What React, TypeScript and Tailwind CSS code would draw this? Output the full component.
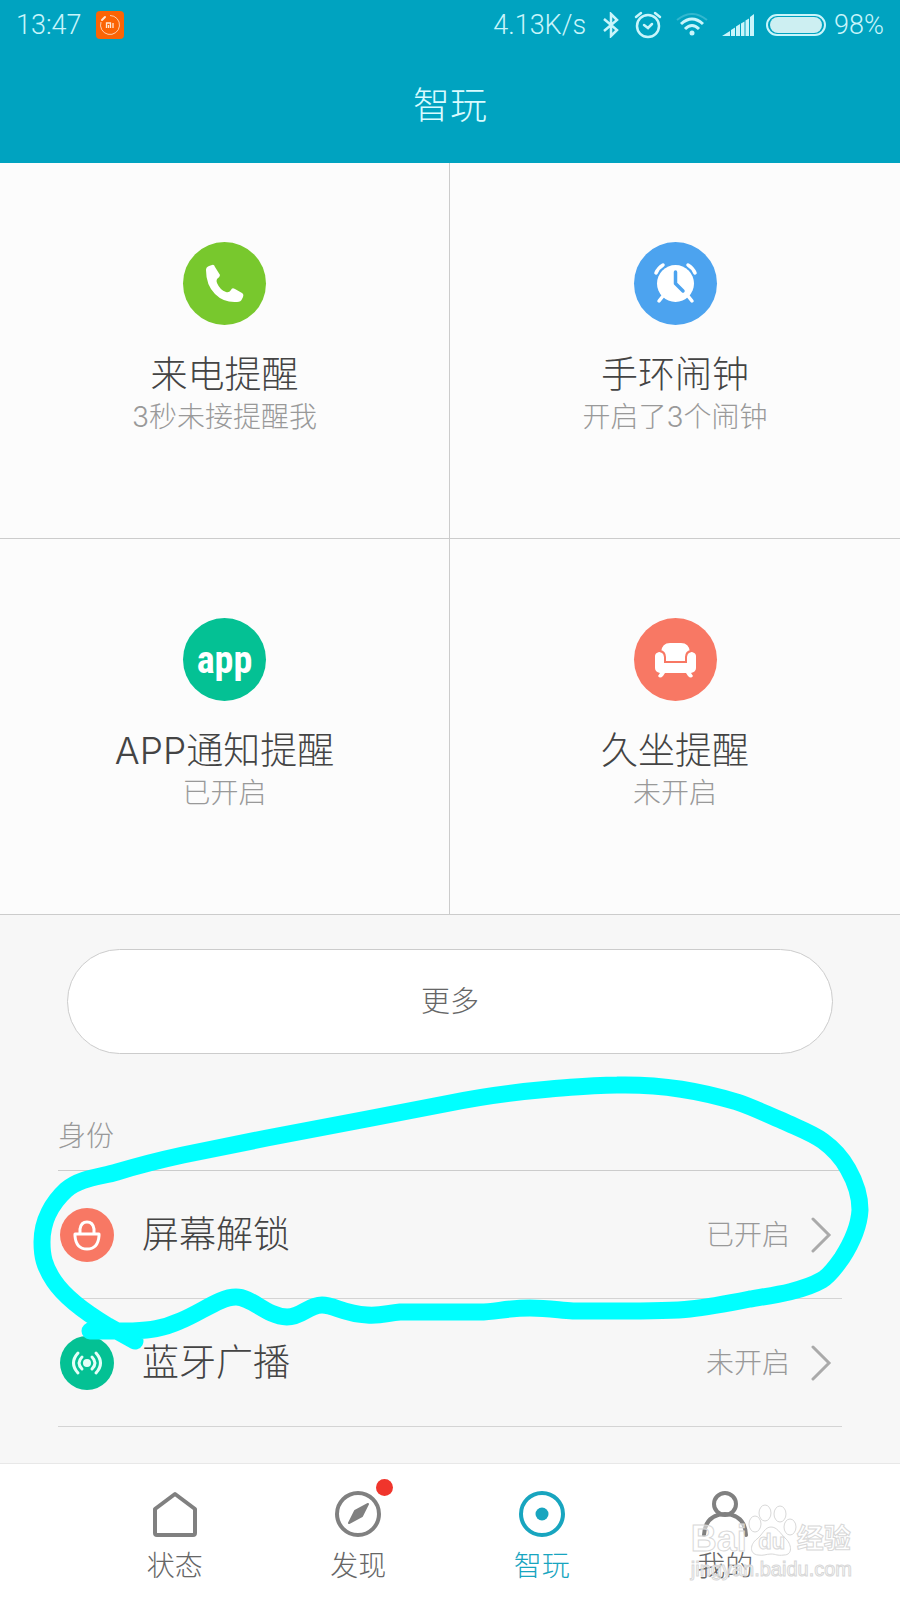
import type { ReactNode } from 'react';

const features = [
    { title: '来电提醒', note: '3秒未接提醒我', color: 'bg-[#78c82d]', icon: <PhoneIcon /> },
    { title: '手环闹钟', note: '开启了3个闹钟', color: 'bg-[#4ca3ef]', icon: <ClockIcon /> },
    { title: 'APP通知提醒', note: '已开启', color: 'bg-[#04c194]', icon: <AppMark /> },
    { title: '久坐提醒', note: '未开启', color: 'bg-[#f87864]', icon: <SofaIcon /> },
];

const identityRows = [
    { title: '屏幕解锁', value: '已开启', color: 'bg-[#f87864]', icon: <LockIcon /> },
    { title: '蓝牙广播', value: '未开启', color: 'bg-[#04c194]', icon: <BroadcastIcon /> },
];

const tabs: { label: string; icon: ReactNode; active?: boolean; dot?: boolean }[] = [
    { label: '状态', icon: <HomeIcon /> },
    { label: '发现', icon: <CompassIcon />, dot: true },
    { label: '智玩', icon: <TargetIcon />, active: true },
    { label: '我的', icon: <PersonIcon /> },
];

function PhoneIcon() {
    return (
        <svg viewBox="0 0 83 83" className="size-full" fill="#fff">
            <path d="M23 28Q23 25 26 24L29 23Q31 22 32 25L37 33Q37 35 34 37Q33 39 34 41Q37 48 43 50Q46 51 48 48Q49 45 52 47L59 51Q61 52 60 55L59 57Q58 60 54 60Q41 61 32 52Q23 43 23 28Z" />
        </svg>
    );
}

function ClockIcon() {
    return (
        <svg viewBox="0 0 83 83" className="size-full" fill="none" strokeLinecap="round" strokeLinejoin="round">
            <circle cx="41.5" cy="41.5" r="18.5" fill="#fff" />
            <path d="M22 31Q24 26 29 23M54 23Q59 26 61 31M29 54L25 59M54 54L58 59" stroke="#fff" strokeWidth="3.5" />
            <path d="M41.5 30V41.5L49 49" stroke="#4ca3ef" strokeWidth="3.5" />
        </svg>
    );
}

function AppMark() {
    return (
        <span className="font-['Roboto_Condensed','Liberation_Sans_Narrow','Roboto',sans-serif] text-[38px] leading-[40px] font-bold">
            app
        </span>
    );
}

function SofaIcon() {
    return (
        <svg viewBox="0 0 83 83" className="size-full" fill="#fff">
            <path d="M27 34Q28 25 36 25H47Q55 25 56 34Q52 36 52 43H31Q31 36 27 34Z" />
            <path d="M21 38Q21 35 25 34Q30 34 30 39V45H53V39Q53 34 58 34Q62 35 62 38V50Q62 54 57 55L59 58Q57 61 54 58L52 55H31L29 58Q26 61 24 58L26 55Q21 54 21 50Z" />
            <path d="M26 33Q31 34 31 39V44H52V39Q52 34 57 33" fill="none" stroke="#f87864" strokeWidth="2" />
        </svg>
    );
}

function LockIcon() {
    return (
        <svg viewBox="0 0 54 54" className="size-full" fill="none" stroke="#fff" strokeWidth="3" strokeLinejoin="round">
            <path d="M15 26H39V28Q38 41 27 41Q16 41 15 28ZM20 26V21Q21 14 27 14Q33 14 34 21V26" />
        </svg>
    );
}

function BroadcastIcon() {
    return (
        <svg viewBox="0 0 54 54" className="size-full" fill="none" stroke="#e4fff8" strokeWidth="3" strokeLinecap="round">
            <circle cx="27" cy="27" r="4" fill="#e4fff8" stroke="none" />
            <path d="M22 21Q16 27 22 33M32 21Q38 27 32 33M18 17Q9 27 18 37M36 17Q45 27 36 37" />
        </svg>
    );
}

function HomeIcon() {
    return (
        <svg viewBox="0 0 46 46" className="size-[46px]" fill="none" stroke="currentColor" strokeWidth="4" strokeLinejoin="round">
            <path d="M3 18L23 3L43 18V42Q43 44 41 44H5Q3 44 3 42Z" />
        </svg>
    );
}

function CompassIcon() {
    return (
        <svg viewBox="0 0 46 46" className="size-[46px]" fill="none" stroke="currentColor" strokeWidth="4">
            <circle cx="23" cy="23" r="21" />
            <path d="M33 13L27 25L14 32L20 20Z" fill="currentColor" strokeWidth="2" strokeLinejoin="round" />
        </svg>
    );
}

function TargetIcon() {
    return (
        <svg viewBox="0 0 46 46" className="size-[46px]" fill="none" stroke="currentColor" strokeWidth="4">
            <circle cx="23" cy="23" r="21" />
            <circle cx="23" cy="23" r="6.5" fill="currentColor" stroke="none" />
        </svg>
    );
}

function PersonIcon() {
    return (
        <svg viewBox="0 0 46 46" className="size-[46px]" fill="none" stroke="currentColor" strokeWidth="4" strokeLinecap="round">
            <circle cx="23" cy="13" r="11" />
            <path d="M2 44Q3 24 23 23Q43 24 44 44" />
        </svg>
    );
}

function StatusBar() {
    return (
        <div className="flex h-12 items-center px-4 pt-0.5 font-['Roboto','Noto_Sans_CJK_SC',sans-serif] text-[27px] font-light text-[#c9f5fb]">
            <span>13:47</span>
            <svg viewBox="0 0 28 28" className="ml-3.5 size-7" fill="none" stroke="#ffe9d6">
                <rect width="28" height="28" rx="4" fill="#fb6404" stroke="none" />
                <path d="M14 4.5A9.5 9.5 0 1 1 5 11" strokeWidth="0.8" />
                <path d="M6 9L9 6" strokeWidth="2" strokeLinecap="round" />
                <path d="M10.5 17V12H14.5V17M12.5 14V17M17 12V17" strokeWidth="1.3" />
            </svg>
            <span className="ml-auto">4.13K/s</span>
            <svg viewBox="0 0 18 26" className="ml-4 h-[26px] w-[18px]" fill="none" stroke="currentColor" strokeWidth="2.5">
                <path d="M2 7L15 18L9 24V2L15 8L2 19" />
            </svg>
            <svg viewBox="0 0 28 28" className="ml-3.5 size-7" fill="none" stroke="currentColor" strokeWidth="2.5" strokeLinecap="round">
                <circle cx="14" cy="15" r="11" />
                <path d="M2 6L7 2M21 2L26 6M10 14L14 17L18 13" />
            </svg>
            <svg viewBox="0 0 32 24" className="ml-3.5 h-6 w-8" fill="none" stroke="currentColor" strokeWidth="3">
                <path d="M1 7Q16 -5 31 7" strokeWidth="2" opacity="0.25" />
                <path d="M5 11Q16 1 27 11M9 16Q16 9 23 16" />
                <circle cx="16" cy="20" r="2.5" fill="currentColor" stroke="none" />
            </svg>
            <svg viewBox="0 0 32 22" className="ml-3.5 h-[22px] w-8" fill="currentColor">
                <path d="M0 22L8 17V22ZM9 22V16L13 13.5V22ZM14 22V12.5L18 10V22ZM19 22V9.5L22.5 7.5V22ZM23.5 22V6.5L27 4.5V22ZM28 22V3L32 0V22Z" />
            </svg>
            <svg viewBox="0 0 60 22" className="ml-3 h-[22px] w-[60px]" fill="none" stroke="currentColor">
                <rect x="1" y="1" width="58" height="20" rx="10" strokeWidth="2" />
                <rect x="4" y="3" width="52" height="16" rx="8" fill="#cdeff2" stroke="none" />
            </svg>
            <span className="ml-2">98%</span>
        </div>
    );
}

function Marker() {
    // hand drawn ring around the screen unlock row
    return (
        <svg viewBox="0 915 900 547" className="pointer-events-none absolute top-0 left-0 w-full" fill="none" stroke="#00ffff" strokeWidth="17" strokeLinecap="round" strokeLinejoin="round">
            <path d="M135 1341L108 1326C88 1314 66 1299 54 1281C44 1266 42 1256 42 1242C42 1220 53 1202 66 1190C80 1178 100 1177 117 1172C140 1165 160 1160 183 1155L267 1138L367 1119L450 1103C484 1096 515 1092 550 1089C575 1087 595 1085 617 1085C660 1084 698 1090 737 1102C755 1108 768 1115 783 1121C798 1128 812 1133 823 1141C834 1149 842 1158 848 1169C856 1183 860 1196 860 1210C859 1228 851 1244 842 1258C835 1268 829 1276 822 1280C803 1291 775 1295 750 1299C730 1303 710 1307 690 1309C665 1312 610 1311 573 1311C558 1310 548 1308 530 1308C507 1308 495 1312 480 1312H400C387 1313 382 1316 367 1315C344 1314 334 1305 322 1305C308 1305 302 1317 287 1317C266 1316 252 1297 236 1297C220 1297 202 1312 180 1321C162 1329 150 1330 133 1331H90" />
        </svg>
    );
}

function Watermark() {
    return (
        <div className="pointer-events-none absolute right-12 bottom-5 text-white/50 [-webkit-text-stroke:1px_#d8d8d8]">
            <div className="flex items-end font-['Liberation_Sans','Noto_Sans_CJK_SC',sans-serif] font-bold">
                <span className="text-[36px] leading-[36px]">Bai</span>
                <span className="relative flex h-[54px] w-[50px] items-end justify-center text-[22px] leading-[30px]">
                    <svg viewBox="0 0 50 54" className="absolute inset-0 size-full" fill="#fff" fillOpacity="0.6" stroke="#d8d8d8">
                        <ellipse cx="8" cy="21" rx="6" ry="8" />
                        <ellipse cx="18" cy="10" rx="6" ry="8" />
                        <ellipse cx="33" cy="11" rx="6" ry="8" />
                        <ellipse cx="43" cy="24" rx="6" ry="8" />
                        <path d="M24 24C30 24 33 30 38 35C45 41 46 52 37 52C30 53 29 51 24 51C19 51 17 53 11 52C2 51 3 41 10 36C16 31 18 24 24 24Z" />
                    </svg>
                    <span className="relative">du</span>
                </span>
                <span className="text-[27px] leading-[36px]">经验</span>
            </div>
            <div className="font-['Liberation_Sans',sans-serif] text-[20px] leading-[24px]">jingyan.baidu.com</div>
        </div>
    );
}

export default function App() {
    return (
        <div className="flex min-h-screen flex-col bg-[#f7f7f7] font-['Inter','Noto_Sans_CJK_SC',sans-serif] font-light text-[#444]">
            <header className="bg-[#00a3c0]">
                <StatusBar />
                <h1 className="flex h-[115px] items-center justify-center text-[37px] text-[#d8fbff]">智玩</h1>
            </header>

            <section className="grid grid-cols-2 bg-[#fcfcfc]">
                {features.map((item) => (
                    <a key={item.title} href="#" className="flex h-[376px] flex-col items-center border-b border-[#ccc] pt-[79px] odd:border-r">
                        <span className={`flex size-[83px] items-center justify-center rounded-full text-white ${item.color}`}>{item.icon}</span>
                        <span className="mt-7 text-[37px] leading-[44px]">{item.title}</span>
                        <span className="text-[28px] leading-[40px] text-[#999]">{item.note}</span>
                    </a>
                ))}
            </section>

            <main className="relative flex-1 pt-[34px] pb-9">
                <div className="px-[67px]">
                    <button className="h-[105px] w-full rounded-full border border-[#ccc] bg-white text-[29px] text-[#666]">更多</button>
                </div>
                <div className="px-[58px]">
                    <h2 className="mt-[62px] border-b border-[#ccc] pb-3.5 text-[28px] leading-[40px] text-[#999]">身份</h2>
                    {identityRows.map((row) => (
                        <a key={row.title} href="#" className="flex h-32 items-center border-b border-[#d4d4d4] pr-2.5">
                            <span className={`ml-0.5 size-[54px] rounded-full ${row.color}`}>{row.icon}</span>
                            <span className="ml-7 text-[37px] leading-[44px]">{row.title}</span>
                            <span className="ml-auto text-[28px] leading-[40px] text-[#999]">{row.value}</span>
                            <svg viewBox="0 0 22 36" className="ml-5 h-9 w-[22px]" fill="none" stroke="#aaa" strokeWidth="3" strokeLinecap="round">
                                <path d="M3 2L19 18L3 34" />
                            </svg>
                        </a>
                    ))}
                </div>
                <Marker />
            </main>

            <nav className="relative flex h-[138px] border-t border-[#e8e8e8] bg-white px-[83px] pt-[27px]">
                {tabs.map((tab) => (
                    <a key={tab.label} href="#" className={`flex flex-1 flex-col items-center ${tab.active ? 'text-[#18a5bf]' : 'text-[#808080]'}`}>
                        <span className="relative">
                            {tab.icon}
                            {tab.dot && <span className="absolute -top-3 -right-3 size-[17px] rounded-full bg-[#f0352c]" />}
                        </span>
                        <span className={`mt-[9px] text-[28px] leading-[40px] ${tab.active ? '' : 'text-[#666]'}`}>{tab.label}</span>
                    </a>
                ))}
                <Watermark />
            </nav>
        </div>
    );
}
